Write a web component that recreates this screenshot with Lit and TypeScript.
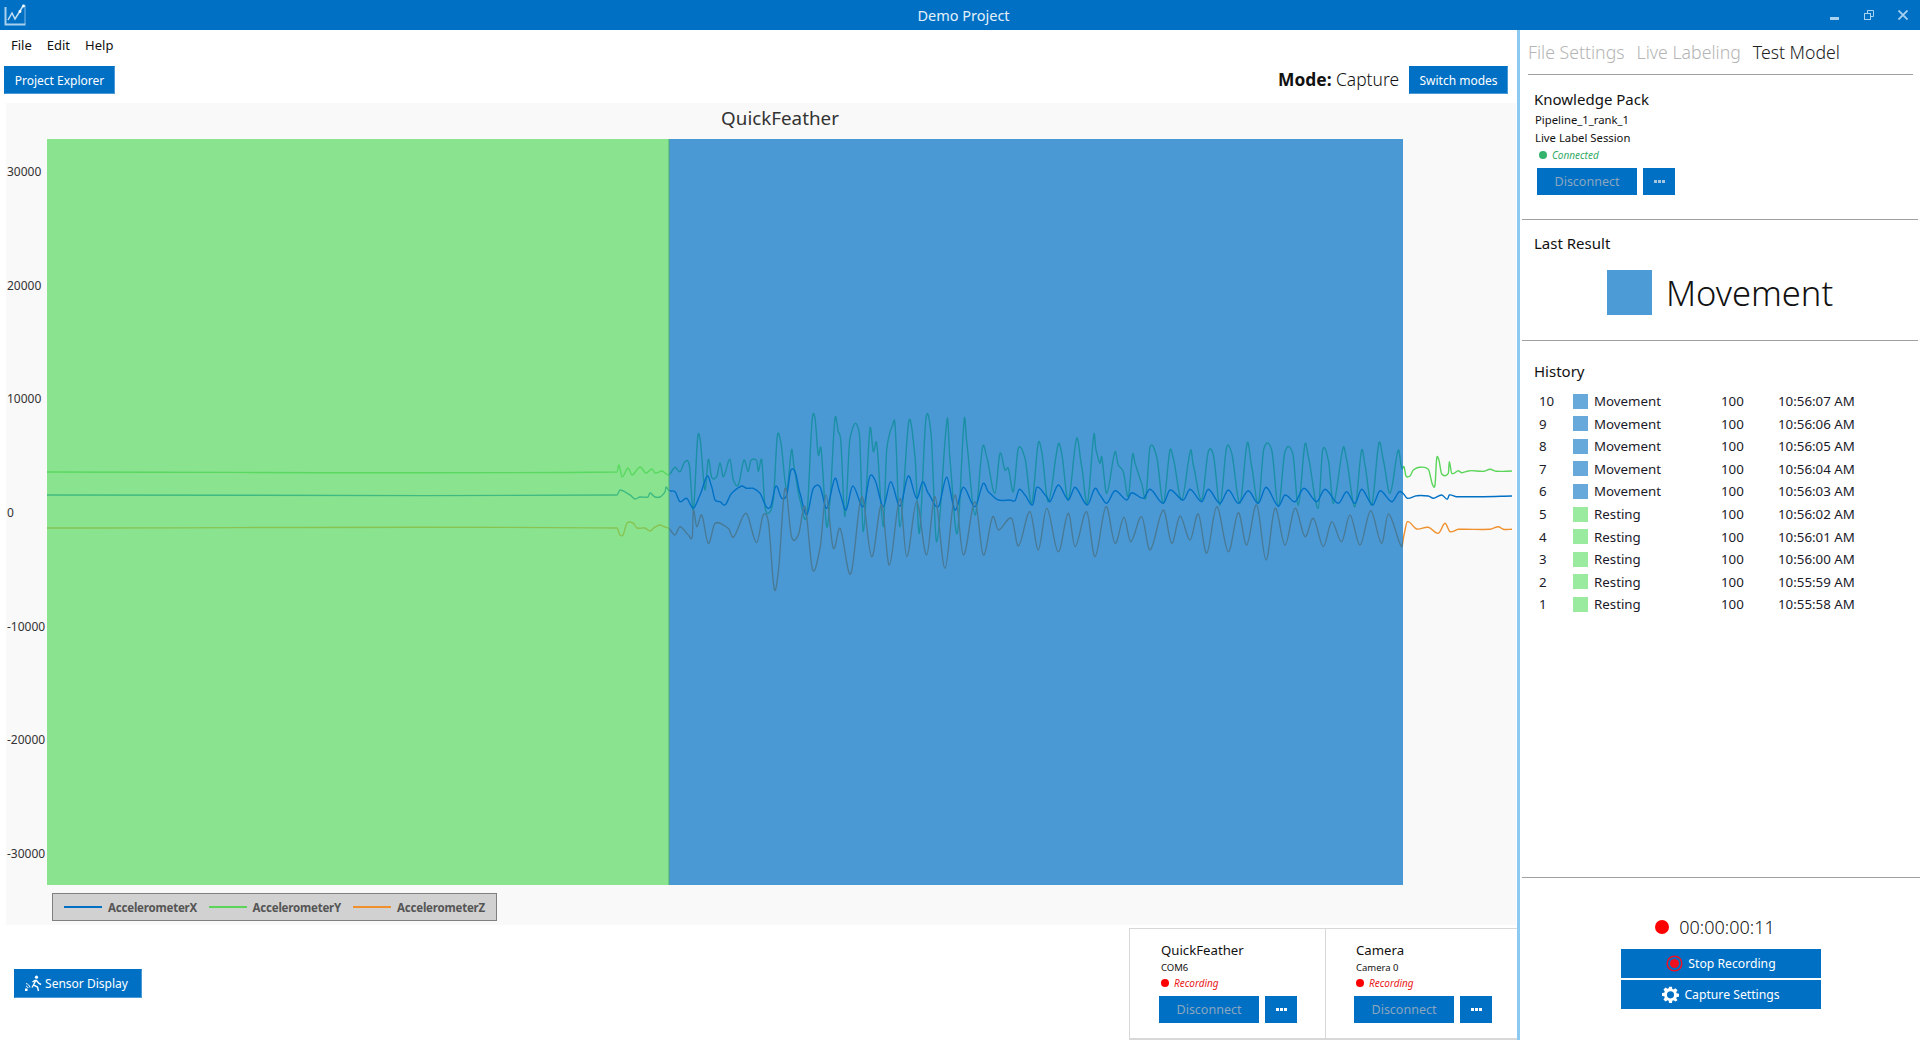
import { LitElement, html, css, svg } from 'lit'
import { customElement } from 'lit/decorators.js'

type Pt = [number, number]

// traces are read off the reference, given as [x, y] in page pixels
const zoom6 = (pts: number[]): Pt[] => pairs(pts).map(([x, y]) => [600 + x / 3, 400 + y / 3])
const zoom7 = (pts: number[]): Pt[] => pairs(pts).map(([x, y]) => [1000 + x / 3, 400 + y / 3])

function pairs(a: number[]): Pt[] {
  const out: Pt[] = []
  for (let i = 0; i < a.length; i += 2) out.push([a[i], a[i + 1]])
  return out
}

const traceY: Pt[] = [
  [47, 472], [617, 472], [619, 465], [622, 477], [628, 468], [632, 475], [640, 467], [646, 473], [652, 469], [655, 473], [662, 471], [665, 473],
  ...zoom6([207,225,225,202,240,215,255,185,268,195,280,330,293,112,300,115,315,270,325,178,335,232,350,230,360,188,370,230,390,178,400,240,415,255,432,180,445,215,452,182,470,182,475,215,485,180,495,320,505,340,520,300,532,108,542,125,560,270,575,148,582,200,600,300,620,348,637,55,645,55,655,165,663,145,680,380,690,300,705,55,715,95,722,120,735,350,750,115,778,100,790,395,810,85,820,155,830,130,850,380,860,150,878,75,885,72,900,380,927,62,945,170,958,400,978,55,993,100,1010,425,1042,55,1050,180,1072,400,1093,55,1100,125,1125,345,1148,140,1160,170,1185,280,1200,160]),
  ...zoom7([15,210,25,205,40,275,55,145,75,175,95,310,115,128,125,155,145,305,175,132,185,160,205,300,230,115,245,200,262,310,282,102,288,150,300,190,305,170,320,280,345,155,355,195,370,215,385,290,398,162,405,190,425,250,437,295,450,142,470,170,490,310,510,150,520,175,545,300,572,150,580,195,605,300,625,155,640,165,660,315,680,142,695,160,720,310,742,128,755,200,775,310,792,145,815,150,835,320,855,155,878,160,895,315,915,132,925,170,955,325,968,150,985,180,1000,310,1030,142,1040,180,1065,320,1085,150,1095,195,1115,315,1137,128,1150,180,1170,280,1195,150,1205,205,1212,200,1218,228,1230,228,1240,210,1258,202,1285,208,1298,255,1305,255,1310,175,1316,178,1325,222,1345,220,1348,185,1355,220,1375,212,1385,218,1410,212,1450,214,1470,208,1490,214,1536,213]),
]

const traceX: Pt[] = [
  [47, 495], [617, 495], [620, 490], [630, 495], [635, 499], [640, 497], [648, 497], [650, 493], [655, 497], [660, 497], [665, 492], [666, 487],
  ...zoom6([207,272,225,275,240,305,260,295,280,325,300,285,322,228,335,260,345,300,360,305,375,315,395,280,425,258,440,265,460,265,480,280,500,322,512,320,528,258,545,295,560,285,572,212,585,215,600,280,620,345,640,265,660,260,680,325,705,235,720,280,738,330,758,258,790,320,810,228,825,240,850,320,872,245,900,318,925,228,950,295,968,245,985,280,1015,320,1040,232,1065,330,1090,262,1125,320,1150,250,1165,275,1195,300]),
  ...zoom7([30,300,45,302,58,268,75,285,98,315,110,262,140,290,150,305,175,255,205,300,225,262,262,315,285,265,300,285,320,310,345,272,380,300,395,278,430,295,450,268,490,310,510,270,550,300,570,268,605,305,625,268,660,310,685,270,715,310,745,272,775,310,798,262,835,318,855,285,885,305,912,265,950,305,975,268,1015,310,1040,275,1065,310,1085,268,1118,315,1140,272,1175,305,1198,275,1209,280,1222,295,1250,287,1285,288,1300,295,1325,285,1342,298,1348,285,1370,290,1395,290,1450,290,1536,288]),
]

const traceZ: Pt[] = [
  [47, 528], [617, 528], [620, 535], [623, 535], [627, 523], [633, 523], [637, 528], [645, 528], [650, 531], [655, 527], [660, 525], [665, 527],
  ...zoom6([207,385,225,405,240,380,265,405,277,410,280,330,290,380,305,345,325,430,345,370,385,385,400,412,438,340,470,428,490,345,505,365,523,568,535,515,555,265,575,412,595,405,615,320,638,510,660,445,678,285,700,445,720,385,752,522,785,290,815,470,845,315,868,495,900,295,920,470,950,305,980,465,1005,290,1035,505,1065,285,1090,465,1125,305,1150,465,1178,350,1195,390]),
  ...zoom7([35,355,55,438,90,335,115,450,140,325,175,455,205,340,225,440,260,335,285,470,318,320,345,430,372,352,392,425,425,350,450,450,490,330,515,430,540,348,570,420,595,342,620,460,650,320,685,455,715,338,740,435,770,315,798,480,825,325,855,435,885,325,915,410,940,355,970,440,995,365,1025,425,1050,345,1080,435,1112,332,1145,430,1165,342,1205,440,1212,405,1222,365,1250,387,1285,382,1315,400,1335,370,1350,395,1375,388,1470,388,1495,380,1510,388,1536,388]),
]

// rounded through the samples, handles stay inside each segment's x span
function toPath(pts: Pt[]) {
  const p = pts.map(([x, y]): Pt => [x - 47, y - 139])
  const slope = (i: number) => {
    const a = p[Math.max(i - 1, 0)]
    const b = p[Math.min(i + 1, p.length - 1)]
    return ((b[1] - a[1]) / (b[0] - a[0])) * 0.8
  }
  let d = `M${p[0][0].toFixed(1)} ${p[0][1].toFixed(1)}`
  for (let i = 0; i < p.length - 1; i++) {
    const b = p[i]
    const c = p[i + 1]
    const dx = (c[0] - b[0]) / 3
    d += `C${(b[0] + dx).toFixed(1)} ${(b[1] + slope(i) * dx).toFixed(1)} ${(c[0] - dx).toFixed(1)} ${(c[1] - slope(i + 1) * dx).toFixed(1)} ${c[0].toFixed(1)} ${c[1].toFixed(1)}`
  }
  return d
}

const HISTORY = [
  [10, 'Movement', '10:56:07 AM'],
  [9, 'Movement', '10:56:06 AM'],
  [8, 'Movement', '10:56:05 AM'],
  [7, 'Movement', '10:56:04 AM'],
  [6, 'Movement', '10:56:03 AM'],
  [5, 'Resting', '10:56:02 AM'],
  [4, 'Resting', '10:56:01 AM'],
  [3, 'Resting', '10:56:00 AM'],
  [2, 'Resting', '10:55:59 AM'],
  [1, 'Resting', '10:55:58 AM'],
] as const

const TICKS = ['30000', '20000', '10000', '0', '-10000', '-20000', '-30000']

const dots = html`<svg width="11" height="3" viewBox="0 0 11 3"><rect width="3" height="3"></rect><rect x="4" width="3" height="3"></rect><rect x="8" width="3" height="3"></rect></svg>`

@customElement('app-root')
export class AppRoot extends LitElement {
  static styles = css`
    :host {
      display: block;
      height: 1040px;
      overflow: hidden;
      font-family: 'Noto Sans', 'Open Sans', sans-serif;
      color: #111;
      background: #fff;
    }
    .titlebar {
      height: 30px;
      background: #0070c5;
      color: #e4f0f9;
      display: grid;
      grid-template-columns: 1fr auto 1fr;
      align-items: center;
      font-size: 14.5px;
    }
    .title {
      padding-left: 7px;
    }
    .logo {
      margin-left: 4px;
      display: block;
    }
    .winbtns {
      justify-self: end;
      display: flex;
      align-items: center;
      gap: 24px;
      padding-right: 12px;
    }
    .winbtns svg {
      display: block;
    }
    .main {
      display: flex;
      height: 1010px;
    }
    .left {
      width: 1517px;
      display: flex;
      flex-direction: column;
    }
    .split {
      width: 3px;
      background: #8ccbf1;
    }
    .right {
      flex: 1;
      min-width: 0;
      display: flex;
      flex-direction: column;
    }
    .menu {
      height: 30px;
      display: flex;
      align-items: center;
      gap: 15px;
      padding-left: 11px;
      box-sizing: border-box;
      font-size: 13px;
    }
    .toolbar {
      height: 28px;
      margin-top: 6px;
      padding: 0 9px 0 4px;
      display: flex;
      align-items: center;
      justify-content: space-between;
    }
    .btn {
      background: #0070c5;
      color: #fff;
      font-size: 12px;
      display: flex;
      align-items: center;
      justify-content: center;
      box-sizing: border-box;
      white-space: nowrap;
    }
    .btn.edge {
      border: 1px solid #4a9ad8;
      border-top-color: #0070c5;
      border-left-color: #0070c5;
    }
    .btn.explorer {
      width: 111px;
      height: 28px;
    }
    .btn.switch {
      width: 99px;
      height: 28px;
    }
    .mode {
      display: flex;
      align-items: center;
      gap: 10px;
      font-size: 17.4px;
    }
    .mode > span {
      margin-bottom: 3px;
      font-weight: 300;
    }
    .mode b {
      font-weight: 700;
    }
    .chart {
      margin: 9px 0 0 6px;
      width: 1510px;
      height: 822px;
      background: #f9f9f9;
      display: grid;
      grid-template-columns: 41px 1469px;
      grid-template-rows: 36px 746px 1fr;
    }
    .chart-title {
      grid-column: 1 / 3;
      font-size: 18.8px;
      color: #333;
      text-align: center;
      width: 1548px;
      line-height: 31px;
    }
    .axis {
      display: flex;
      flex-direction: column;
      justify-content: space-between;
      padding: 26px 0 24px 1px;
      font-size: 12px;
      line-height: 14px;
      color: #333;
    }
    .plot {
      display: block;
    }
    .legend {
      grid-column: 2;
      justify-self: start;
      margin: 8px 0 0 5px;
      width: 445px;
      height: 28px;
      box-sizing: border-box;
      border: 1px solid #808080;
      background: #d1d1d1;
      display: flex;
      align-items: center;
      padding-left: 11px;
      gap: 11px;
      color: #555;
      font-size: 11.5px;
      letter-spacing: -0.2px;
      font-weight: 700;
    }
    .legend-item {
      display: flex;
      align-items: center;
      gap: 6px;
      width: 133.5px;
    }
    .legend-line {
      flex: none;
      width: 38px;
      height: 2px;
    }
    .bottom {
      flex: 1;
      display: flex;
      justify-content: space-between;
      align-items: stretch;
      padding-top: 3px;
    }
    .btn.sensor {
      width: 128px;
      height: 29px;
      margin: 41px 0 0 14px;
      padding-right: 3px;
      font-size: 12px;
      gap: 3px;
    }
    .devices {
      display: flex;
      height: 109px;
      border: 1px solid #d8d8d8;
      border-right: 0;
      border-bottom-width: 2px;
    }
    .device {
      width: 195px;
      box-sizing: border-box;
      padding: 13px 0 0 29px;
    }
    .device + .device {
      border-left: 1px solid #d8d8d8;
      width: 192px;
      padding-left: 28px;
    }
    .device h4 {
      margin: 0 0 0 2px;
      font-size: 13.2px;
      font-weight: 400;
      line-height: 16px;
    }
    .small {
      font-size: 9.5px;
      line-height: 14px;
      margin: 3px 0 0 2px;
    }
    .status {
      display: flex;
      align-items: center;
      gap: 5px;
      font-size: 10px;
      font-style: italic;
      line-height: 14px;
      margin: 1px 0 0 2px;
      color: #e81a1a;
    }
    .dot {
      width: 8px;
      height: 8px;
      border-radius: 50%;
      background: #f00;
    }
    .btn-row {
      display: flex;
      gap: 6px;
      margin-top: 6px;
    }
    .btn.disc {
      width: 100px;
      height: 27px;
      font-size: 12.5px;
      color: #8ba6be;
    }
    .btn.more {
      width: 32px;
      height: 27px;
      fill: #fff;
    }
    .tabs {
      height: 45px;
      margin: 0 7px 0 8px;
      box-sizing: border-box;
      border-bottom: 1px solid #a0a0a0;
      display: flex;
      align-items: center;
      gap: 12px;
      font-size: 17.7px;
      font-weight: 300;
      color: #b4b4b4;
    }
    .tabs .on {
      color: #222;
    }
    .pack {
      height: 145px;
      box-sizing: border-box;
      padding: 15px 0 0 12px;
      border-bottom: 1px solid #a0a0a0;
      margin: 0 2px;
    }
    h3 {
      margin: 0;
      font-size: 15px;
      font-weight: 400;
      line-height: 18px;
    }
    .line {
      font-size: 11.3px;
      line-height: 18px;
      margin-left: 1px;
    }
    .pack .line:first-of-type {
      margin-top: 3px;
    }
    .pack .status {
      color: #33aa66;
      margin: 1px 0 0 5px;
    }
    .pack .dot {
      background: #33b36b;
    }
    .pack .btn-row {
      margin: 6px 0 0 3px;
    }
    .pack .btn.more {
      fill: #a6c6e0;
    }
    .last {
      height: 121px;
      box-sizing: border-box;
      padding: 14px 0 0 12px;
      border-bottom: 1px solid #a0a0a0;
      margin: 0 2px;
    }
    .result {
      display: flex;
      align-items: center;
      gap: 14px;
      margin: 18px 0 0 73px;
      font-size: 34.5px;
      font-weight: 300;
      line-height: 45px;
    }
    .result i {
      width: 45px;
      height: 45px;
      background: #4c9bd6;
    }
    .hist {
      flex: 1;
      padding: 21px 0 0 14px;
    }
    .rows {
      margin: 10px 0 0 0;
      display: grid;
      grid-auto-rows: 22.55px;
      grid-template-columns: 39px 21px 127px 57px auto;
      align-items: center;
      font-size: 13.3px;
      color: #1a1a2a;
    }
    .rows span:nth-child(5n + 1) {
      padding-left: 5px;
    }
    .sw {
      width: 15px;
      height: 15px;
    }
    .sw.Movement {
      background: #68a9dc;
    }
    .sw.Resting {
      background: #9aea9f;
    }
    .rec {
      height: 163px;
      box-sizing: border-box;
      border-top: 1px solid #a0a0a0;
      margin-left: 2px;
      display: flex;
      flex-direction: column;
      align-items: center;
      padding-top: 37px;
    }
    .timer {
      display: flex;
      align-items: center;
      gap: 10px;
      font-size: 18px;
      font-weight: 300;
      line-height: 24px;
      margin: 0 12px 10px 0;
    }
    .timer .dot {
      width: 14px;
      height: 14px;
    }
    .btn.wide {
      width: 200px;
      height: 29px;
      font-size: 12.2px;
      gap: 5px;
    }
    .rec .wide + .wide {
      margin-top: 2px;
    }
  `

  private renderDevice(name: string, port: string) {
    return html`<div class="device">
      <h4>${name}</h4>
      <div class="small">${port}</div>
      <div class="status"><span class="dot"></span>Recording</div>
      <div class="btn-row">
        <div class="btn disc">Disconnect</div>
        <div class="btn more">${dots}</div>
      </div>
    </div>`
  }

  render() {
    return html`
      <div class="titlebar">
        <svg class="logo" width="22" height="22" viewBox="0 0 22 22" fill="none" stroke="#c6e0f4">
          <path d="M1.500 3v17.500h20" stroke-width="2" opacity=".85"></path>
          <path d="M21 1v19" stroke-width="1.200" opacity=".55"></path>
          <path d="M4 16l4-7 3 6 5-8 3-5" stroke-width="1.500"></path>
          <circle cx="16" cy="7.500" r="1.400" fill="#fff" stroke="none"></circle>
          <circle cx="19.500" cy="2" r="1.400" fill="#fff" stroke="none"></circle>
        </svg>
        <div class="title">Demo Project</div>
        <div class="winbtns">
          <svg width="10" height="10" viewBox="0 0 10 10"><rect y="7" width="9" height="3" fill="#a9d2f0"></rect></svg>
          <svg width="10" height="10" viewBox="0 0 10 10" fill="none" stroke="#a9d2f0">
            <rect x=".5" y="3.500" width="6" height="6"></rect>
            <path d="M3.500 3.500v-3h6v6h-3"></path>
          </svg>
          <svg width="10" height="10" viewBox="0 0 10 10" stroke="#a9d2f0" stroke-width="1.800"><path d="M.5.5l9 9M9.500.5l-9 9"></path></svg>
        </div>
      </div>
      <div class="main">
        <div class="left">
          <div class="menu"><span>File</span><span>Edit</span><span>Help</span></div>
          <div class="toolbar">
            <div class="btn edge explorer">Project Explorer</div>
            <div class="mode">
              <span><b>Mode:</b> Capture</span>
              <div class="btn edge switch">Switch modes</div>
            </div>
          </div>
          <div class="chart">
            <div class="chart-title">QuickFeather</div>
            <div class="axis">${TICKS.map((t) => html`<span>${t}</span>`)}</div>
            ${this.renderPlot()}
            <div class="legend">
              <div class="legend-item"><span class="legend-line" style="background:#0070c5"></span>AccelerometerX</div>
              <div class="legend-item"><span class="legend-line" style="background:#5ad55a"></span>AccelerometerY</div>
              <div class="legend-item"><span class="legend-line" style="background:#f0902c"></span>AccelerometerZ</div>
            </div>
          </div>
          <div class="bottom">
            <div class="btn edge sensor">
              <svg width="17" height="17" viewBox="0 0 17 17" fill="none" stroke="#fff">
                <circle cx="11.500" cy="2.200" r="1.600" fill="#fff" stroke="none"></circle>
                <path d="M11 5l-2.500 5 4 2 1 4M9 9l-2 3.500M11 5l3 3.500 2 1M10.500 5L7.500 7" stroke-width="1.400"></path>
                <path d="M1 8.500c2 .5 3.500 2 4 4M1 11c1 .3 1.800 1 2.200 2" stroke-width="1"></path>
                <rect x="0" y="13.500" width="2.500" height="2.500" fill="#fff" stroke="none"></rect>
              </svg>
              Sensor Display
            </div>
            <div class="devices">
              ${this.renderDevice('QuickFeather', 'COM6')}
              ${this.renderDevice('Camera', 'Camera 0')}
            </div>
          </div>
        </div>
        <div class="split"></div>
        <div class="right">
          <div class="tabs"><span>File Settings</span><span>Live Labeling</span><span class="on">Test Model</span></div>
          <div class="pack">
            <h3>Knowledge Pack</h3>
            <div class="line">Pipeline_1_rank_1</div>
            <div class="line">Live Label Session</div>
            <div class="status"><span class="dot"></span>Connected</div>
            <div class="btn-row">
              <div class="btn disc">Disconnect</div>
              <div class="btn more">${dots}</div>
            </div>
          </div>
          <div class="last">
            <h3>Last Result</h3>
            <div class="result"><i></i>Movement</div>
          </div>
          <div class="hist">
            <h3>History</h3>
            <div class="rows">
              ${HISTORY.map(
                ([n, label, time]) => html`<span>${n}</span><span class="sw ${label}"></span><span>${label}</span><span>100</span><span>${time}</span>`,
              )}
            </div>
          </div>
          <div class="rec">
            <div class="timer"><span class="dot"></span>00:00:00:11</div>
            <div class="btn wide">
              <svg width="17" height="17" viewBox="0 0 17 17">
                <circle cx="8.500" cy="8.500" r="7.300" fill="none" stroke="#ef1020" stroke-width="1.500"></circle>
                <circle cx="8.500" cy="8.500" r="4.600" fill="#ef1020"></circle>
              </svg>
              Stop Recording
            </div>
            <div class="btn wide">
              <svg width="17" height="17" viewBox="0 0 24 24" fill="#fff">
                <path fill-rule="evenodd" d="M10 1h4l.6 3.200 1.700.7L19 3.100 21.900 6l-1.800 2.700.7 1.700L24 11v4l-3.200.6-.7 1.700 1.800 2.700L19 21.900l-2.700-1.800-1.700.7L14 24h-4l-.6-3.200-1.700-.7L5 21.900 2.100 19l1.800-2.700-.7-1.700L0 14v-4l3.200-.6.7-1.700L2.100 5 5 2.100l2.700 1.800 1.700-.7zM12 7.500a5 5 0 1 0 0 10 5 5 0 0 0 0-10z"></path>
              </svg>
              Capture Settings
            </div>
          </div>
        </div>
      </div>
    `
  }

  private renderPlot() {
    return html`<svg class="plot" width="1469" height="746" viewBox="0 0 1469 746" fill="none" stroke-width="1.4">
      ${svg`
        <path d=${toPath(traceY)} stroke="#5ad55a"></path>
        <path d=${toPath(traceX)} stroke="#0070c5"></path>
        <path d=${toPath(traceZ)} stroke="#f0902c"></path>
        <rect x="0" y="0" width="622" height="746" fill="#5ada62" fill-opacity=".7"></rect>
        <rect x="622" y="0" width="734" height="746" fill="#0070c5" fill-opacity=".7"></rect>
        <rect x="621.500" y="0" width="1" height="746" fill="#4fae7a"></rect>
      `}
    </svg>`
  }
}
